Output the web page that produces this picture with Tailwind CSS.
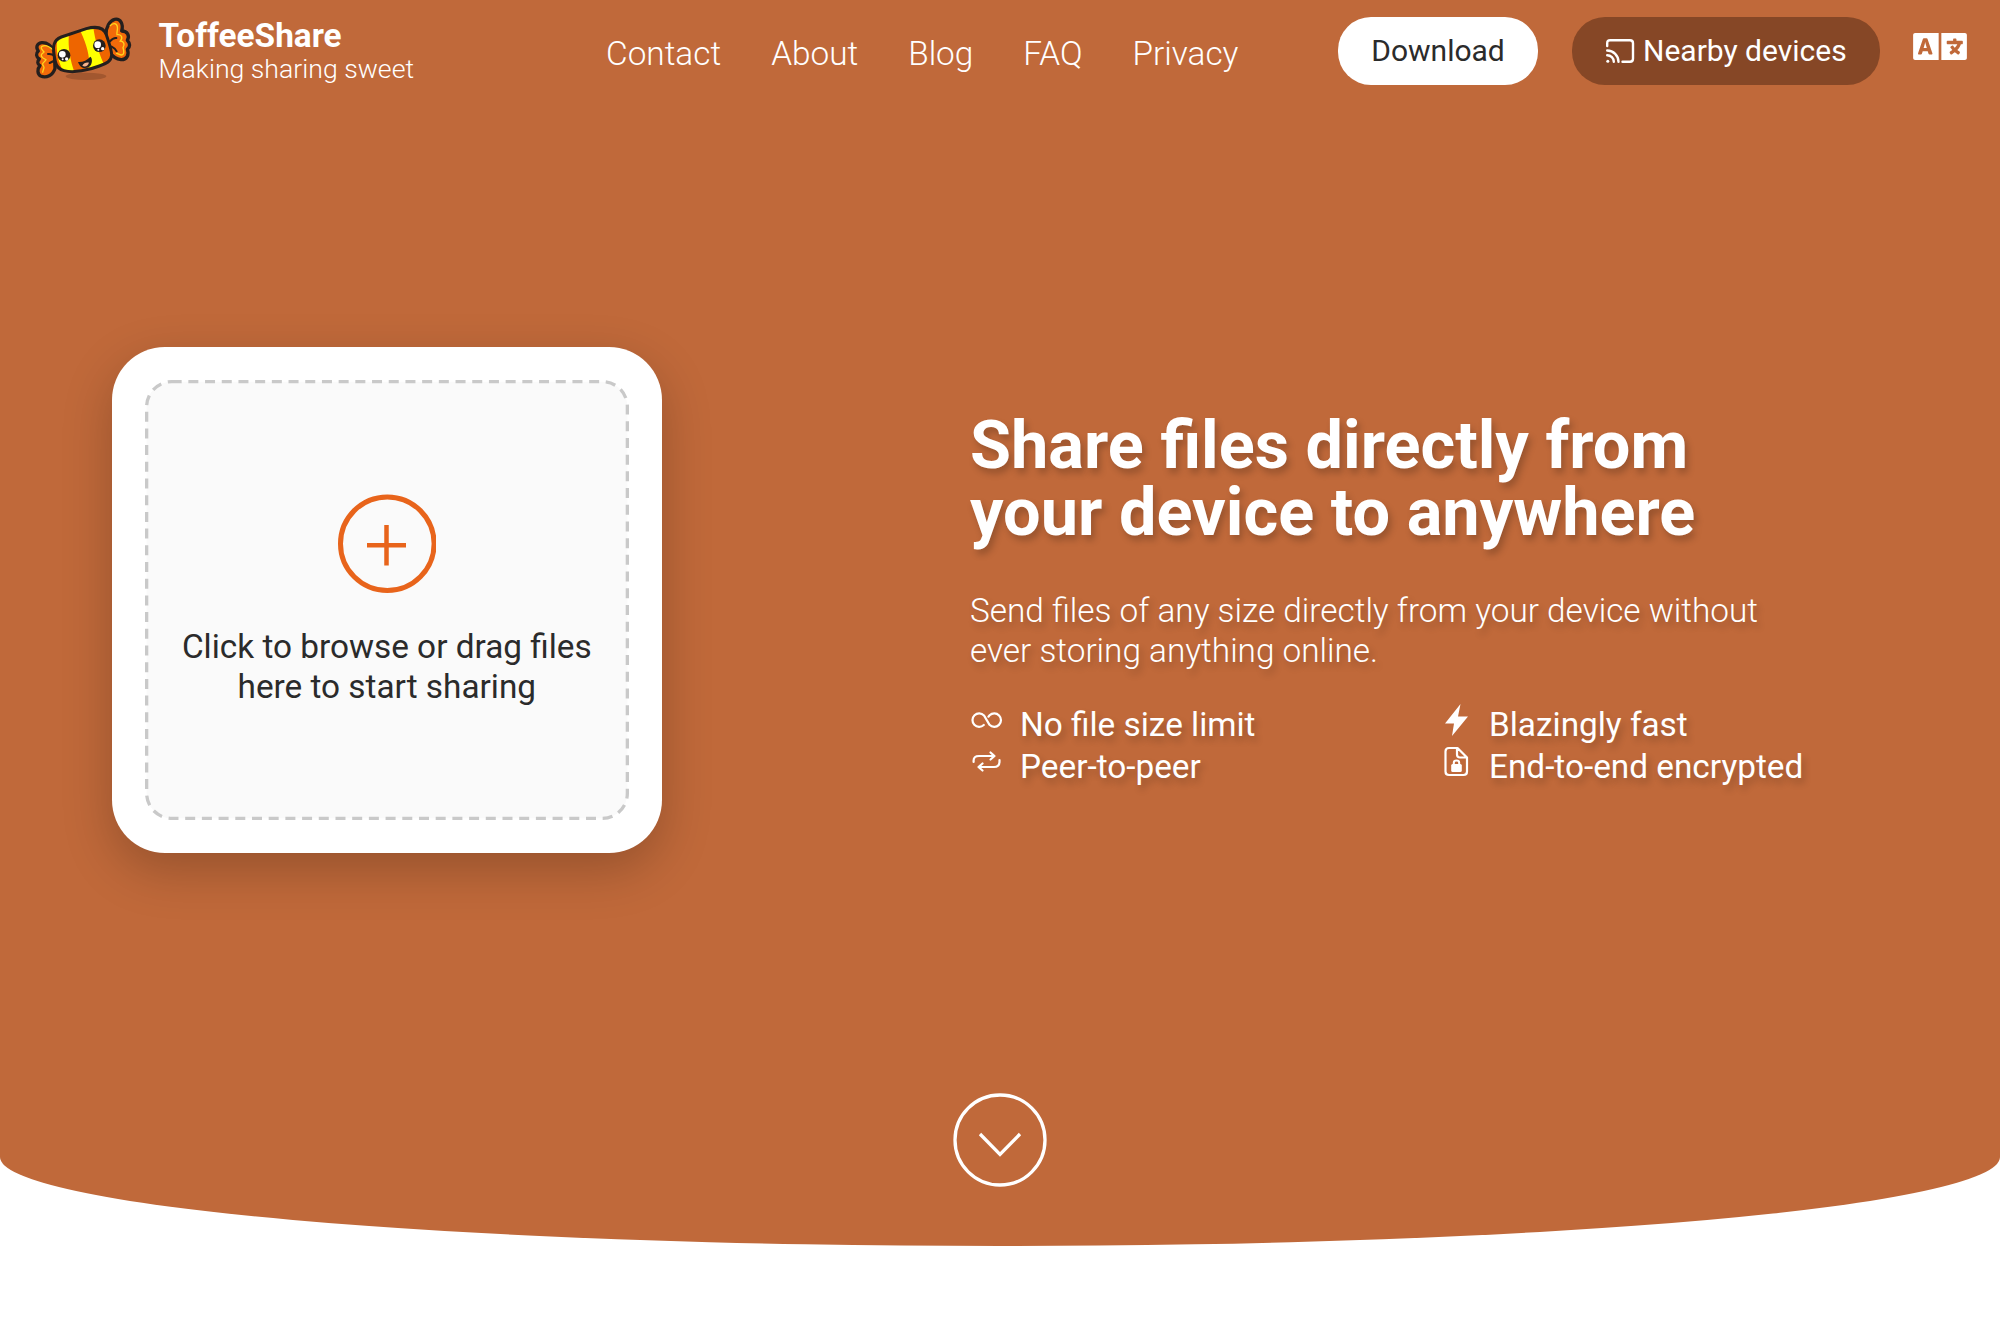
<!DOCTYPE html>
<html lang="en">

<head>
    <meta charset="UTF-8" />
    <title>ToffeeShare</title>
    <meta name="viewport" content="width=device-width, initial-scale=1.0" />
    <script src="https://cdn.jsdelivr.net/npm/@tailwindcss/browser@4"></script>
    <style>
        body {
            font-family: Roboto, 'Liberation Sans', sans-serif;
        }
    </style>
</head>

<body class="bg-white overflow-hidden">
    <div class="h-[1246px] flex flex-col bg-[#c0693a] rounded-b-[50%_89px] text-white">
        <header class="h-[103px] flex items-start pl-5 pr-[33px]">
            <a href="#" class="flex">
                <!-- candy logo -->
                <svg class="w-[130px] h-20 mt-2.5" viewBox="0 0 390 240">
                    <ellipse cx="198" cy="199" rx="61" ry="11" fill="#8d4b28" opacity=".6" />
                    <g stroke="#241f1e" stroke-width="10" stroke-linejoin="round" stroke-linecap="round">
                        <path fill="#f26a0a" d="M103 124C94 107 80 97 65 98c-15 2-18 15-10 25-8 7-7 18 3 24-7 7-6 15 2 20-9 10-8 26 2 31 17 7 37-2 43-23z" />
                        <path fill="#f26a0a" d="M258 74c0-22 10-42 26-46 17-3 27 13 21 35 17 0 25 14 17 28 9 9 9 20 0 27 7 17-3 32-19 31-15-2-28-12-38-24z" />
                    </g>
                    <path d="M99 120c-10-10-22-17-33-11-6 4 0 10 6 17-6 5-14 10-3 18l9 5c-4 8-16 11-7 20 5 6-6 14-2 19" fill="none" stroke="#ffd51c" stroke-width="4" />
                    <path d="M270 48c8-10 20-9 22 2 2 10-3 18-1 24 11-2 20 8 10 19 10 1 15 10 8 20 3 9 5 21-4 22-7 0-9-4-17-6" fill="none" stroke="#ffd51c" stroke-width="4" />
                    <path d="M84 132c8-1 14 1 20 5M89 159l12-6M270 94c6-7 13-11 19-10M275 110c6 3 13 9 15 14" fill="none" stroke="#241f1e" stroke-width="6" stroke-linecap="round" />
                    <clipPath id="body">
                        <path d="M102 104c3-12 10-18 22-23l75-25c30-8 52-4 60 18 7 20 16 46 16 61-1 19-16 26-37 33-31 12-76 22-106 14-15-4-23-13-26-28-4-18-8-36-4-50z" />
                    </clipPath>
                    <g clip-path="url(#body)">
                        <path fill="#ee6500" d="M90 40h200v160H90z" />
                        <path fill="#ffff00" d="M114 76l34-14c-5 35-2 80 18 132h-30c-24-38-31-78-22-118z" />
                        <path fill="#ffff00" d="M176 52l43-10c3 36 17 94 39 132l-60 20c19-34 7-82-22-142z" />
                    </g>
                    <path d="M102 104c3-12 10-18 22-23l75-25c30-8 52-4 60 18 7 20 16 46 16 61-1 19-16 26-37 33-31 12-76 22-106 14-15-4-23-13-26-28-4-18-8-36-4-50z" fill="none" stroke="#241f1e" stroke-width="9" />
                    <g fill="#241f1e">
                        <circle cx="132" cy="136" r="19" />
                        <circle cx="238" cy="107" r="19" />
                        <path d="M174 156c14 1 27-5 37-16 5 3 7 14 2 24-7 12-26 13-33 3-3-4-5-8-6-11z" />
                    </g>
                    <path d="M187 167c4-7 11-11 20-9-3 10-12 14-20 9z" fill="#f6b38c" />
                    <g fill="#fff">
                        <circle cx="127" cy="133" r="10" />
                        <circle cx="140" cy="147" r="5" />
                        <circle cx="128" cy="148" r="3" />
                        <circle cx="233" cy="104" r="10" />
                        <circle cx="248" cy="116" r="5" />
                        <circle cx="235" cy="119" r="3" />
                    </g>
                </svg>
                <div class="ml-[8.500px] mt-4 whitespace-nowrap">
                    <div class="text-[33.33px] leading-10 font-bold">ToffeeShare</div>
                    <div class="text-[26.67px] leading-[26px] font-light">Making sharing sweet</div>
                </div>
            </a>

            <nav class="ml-[192px] mt-[34px] flex gap-[50px] text-[33.33px] leading-10 font-light whitespace-nowrap">
                <a href="#">Contact</a>
                <a href="#">About</a>
                <a href="#">Blog</a>
                <a href="#">FAQ</a>
                <a href="#">Privacy</a>
            </nav>

            <div class="ml-auto flex shrink-0 text-[30px] leading-[68px] whitespace-nowrap">
                <a href="#" class="mt-[17px] w-[200px] h-[68px] rounded-[33px] bg-white text-[#2b2b2b] text-center">Download</a>
                <a href="#" class="ml-[34px] mt-[17px] w-[308px] h-[68px] rounded-[33px] bg-[#864726] flex items-center pl-[33px]">
                    <svg class="w-[30px] h-[30px] mr-2 mt-1" viewBox="0 0 30 30" fill="none" stroke="#fff" stroke-width="2.4" stroke-linecap="round">
                        <path d="M2.2 8V5.2Q2.2 2.2 5.2 2.2H25Q28 2.2 28 5.2V20.800Q28 23.800 25 23.800H17.500" />
                        <path d="M2.200 12.500A11.300 11.300 0 0 1 13.500 23.800M2.200 17.200A6.600 6.600 0 0 1 8.800 23.800" />
                        <circle cx="2.800" cy="23.200" r="1.500" fill="#fff" stroke="none" />
                    </svg>
                    Nearby devices
                </a>
                <svg class="ml-[33px] mt-[25px] w-[54px] h-[43px]" viewBox="0 0 640 512" fill="#fff">
                    <path d="M152.1 236.2c-3.5-12.1-7.8-33.2-7.8-33.2h-.5s-4.3 21.1-7.8 33.2l-11.1 37.5H163zM616 96H336v320h280c13.3 0 24-10.7 24-24V120c0-13.3-10.700-24-24-24zm-24 120c0 6.600-5.400 12-12 12h-11.400c-6.900 23.600-21.700 47.400-42.700 69.900 8.400 6.400 17.100 12.500 26.100 18 5.500 3.400 7.300 10.500 4.100 16.200l-7.900 13.900c-3.400 5.900-10.900 7.800-16.700 4.300-12.600-7.800-24.500-16.100-35.400-24.900-10.900 8.700-22.700 17.100-35.400 24.900-5.800 3.500-13.300 1.600-16.700-4.300l-7.900-13.900c-3.200-5.600-1.400-12.800 4.200-16.200 9.300-5.700 18-11.700 26.100-18-7.900-8.400-14.900-17-21-25.700-4-5.700-2.200-13.600 3.700-17.100l6.500-3.900 7.300-4.300c5.400-3.200 12.400-1.700 16 3.400 5 7 10.800 14 17.400 20.900 13.500-14.200 23.800-28.900 30-43.200H412c-6.600 0-12-5.400-12-12v-16c0-6.600 5.400-12 12-12h64v-16c0-6.600 5.400-12 12-12h16c6.600 0 12 5.400 12 12v16h64c6.600 0 12 5.400 12 12zM0 120v272c0 13.300 10.700 24 24 24h280V96H24c-13.300 0-24 10.700-24 24zm58.900 216.100L116.400 167c1.700-4.900 6.200-8.100 11.400-8.100h32.500c5.100 0 9.700 3.300 11.400 8.100l57.500 169.100c2.600 7.800-3.100 15.900-11.400 15.900h-22.900a12 12 0 0 1-11.500-8.600l-9.400-31.900h-60.200l-9.100 31.800c-1.500 5.100-6.200 8.700-11.500 8.700H70.300c-8.200 0-14-8.100-11.400-15.900z" />
                </svg>
            </div>
        </header>

        <main class="flex-1 flex items-start">
            <!-- drop zone -->
            <div class="ml-[111.500px] mt-[243.500px] w-[550.500px] h-[506.500px] shrink-0 p-[33.300px] bg-white rounded-[53px] shadow-[0_17px_50px_rgba(0,0,0,0.22)]">
                <div class="w-full h-full grid text-[#2b2b2b]">
                    <svg class="col-start-1 row-start-1 w-[484px] h-[440px]" viewBox="0 0 484 440">
                        <rect x="1.650" y="1.650" width="480.700" height="436.700" rx="25" fill="#fafafa" stroke="#c9c9c9" stroke-width="3.300" stroke-dasharray="10 6.700" />
                    </svg>
                    <div class="col-start-1 row-start-1 flex flex-col items-center">
                        <svg class="mt-[114.500px] w-[99px] h-[99px]" viewBox="0 0 99 99" fill="none" stroke="#e8641b" stroke-width="5">
                            <circle cx="50.300" cy="49.700" r="46.800" />
                            <path d="M30 51.200h39M49.500 31v40.500" stroke-width="4.500" />
                        </svg>
                        <p class="mt-[34px] text-center text-[33.33px] leading-10 whitespace-nowrap">Click to browse or drag files<br />here to start sharing</p>
                    </div>
                </div>
            </div>

            <div class="ml-[308px] mt-[309px] w-[940px] whitespace-nowrap text-shadow-[3px_5px_7px_rgba(0,0,0,0.22)]">
                <h1 class="text-[66.67px] leading-[66.67px] font-bold">Share files directly from<br />your device to anywhere</h1>
                <p class="mt-[46px] text-[33.33px] leading-10 font-light">Send files of any size directly from your device without<br />ever storing anything online.</p>
                <ul class="mt-[33px] grid grid-cols-[469px_1fr] text-[33.33px] leading-[41.67px]">
                    <li class="flex">
                        <svg class="w-[50px] h-[42px]" viewBox="0 0 50 42" fill="none" stroke="#fff" stroke-width="2.200" stroke-linecap="round">
                            <path d="M13.800 21A6.700 6.700 0 1 1 14 11.500L19.500 20.800A6.700 6.700 0 1 0 19.600 11.300L18.400 12.700" />
                        </svg>
                        No file size limit
                    </li>
                    <li class="flex">
                        <svg class="w-[50px] h-[42px]" viewBox="0 0 50 42" fill="#fff">
                            <path d="M21.500 0L6 19.500H15L13 32L29 12.500H19Z" />
                        </svg>
                        Blazingly fast
                    </li>
                    <li class="flex">
                        <svg class="w-[50px] h-[42px]" viewBox="0 0 50 42" fill="none" stroke="#fff" stroke-width="2.200" stroke-linecap="round" stroke-linejoin="round">
                            <path d="M3.600 16V14.500Q3.600 10 9 10H24M20.500 6.500L24.500 10L20.500 13.500" />
                            <path d="M29.500 14V15.500Q29.500 21 24 21H9M12.500 17.500L8.500 21L12.500 24.500" />
                        </svg>
                        Peer-to-peer
                    </li>
                    <li class="flex">
                        <svg class="w-[50px] h-[42px]" viewBox="0 0 50 42" fill="none" stroke="#fff" stroke-width="2.200" stroke-linejoin="round">
                            <g transform="translate(1 0)">
                                <path d="M9 2H17.500L27 11.500V25.500Q27 29 23.500 29H9Q5.500 29 5.500 25.500V5.500Q5.500 2 9 2ZM17 2V8.500Q17 11.500 20 11.500H27" />
                                <rect x="11.200" y="18" width="10.600" height="8" rx="1.500" fill="#fff" stroke="none" />
                                <path d="M13.800 19V16.800Q13.800 14.500 16.500 14.500Q19.200 14.500 19.200 16.800V19" stroke-width="2" />
                            </g>
                        </svg>
                        End-to-end encrypted
                    </li>
                </ul>
            </div>
        </main>

        <a href="#" class="mx-auto mb-[59px]">
            <svg class="w-[94px] h-[94px]" viewBox="0 0 94 94" fill="none" stroke="#fff" stroke-width="3.300">
                <circle cx="47" cy="47" r="45" />
                <path d="M27 41L47 61.500L67 41" />
            </svg>
        </a>
    </div>
</body>

</html>
